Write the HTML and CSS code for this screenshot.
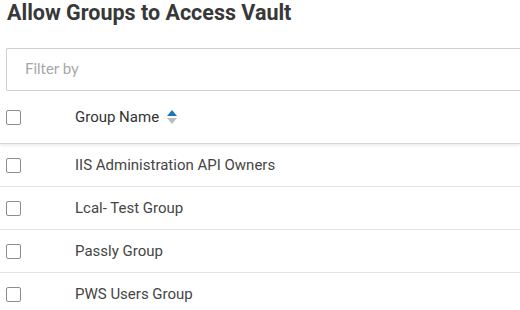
FILE: index.html
```html
<!DOCTYPE html>
<html lang="en">
<head>
  <meta charset="UTF-8">
  <title>Allow Groups to Access Vault</title>
  <link rel="stylesheet" href="styles.css">
</head>
<body>
  <div class="panel">
    <h2 class="panel-title">Allow Groups to Access Vault</h2>

    <div class="filter">
      <input class="filter-input" type="text" placeholder="Filter by">
    </div>

    <div class="grid">
      <div class="grid-row grid-head">
        <div class="cell-check"><span class="checkbox"></span></div>
        <div class="cell-name">
          Group Name
          <svg class="sort-icon" width="10" height="14" viewBox="0 0 10 14">
            <path d="M5 0 L10 6 L0 6 Z" fill="#1c75bc"/>
            <path d="M0 8 L10 8 L5 14 Z" fill="#bdbdbd"/>
          </svg>
        </div>
      </div>
      <div class="grid-row">
        <div class="cell-check"><span class="checkbox"></span></div>
        <div class="cell-name">IIS Administration API Owners</div>
      </div>
      <div class="grid-row">
        <div class="cell-check"><span class="checkbox"></span></div>
        <div class="cell-name">Lcal- Test Group</div>
      </div>
      <div class="grid-row">
        <div class="cell-check"><span class="checkbox"></span></div>
        <div class="cell-name">Passly Group</div>
      </div>
      <div class="grid-row">
        <div class="cell-check"><span class="checkbox"></span></div>
        <div class="cell-name">PWS Users Group</div>
      </div>
    </div>
  </div>
</body>
</html>
```
FILE: styles.css
```css
html, body {
  margin: 0;
  overflow: hidden;
  background: #fff;
}

/* the panel keeps going past the right edge of the window */
.panel {
  padding-left: 6px;
  font-family: Roboto, "Liberation Sans", sans-serif;
  color: #3a3a3a;
}

.panel-title {
  margin: 0;
  padding: 0 0 0 1px;
  font-size: 21.5px;
  font-weight: 700;
  line-height: 26px;
  color: #383838;
}

.filter {
  margin-top: 22px;
}

.filter-input {
  box-sizing: border-box;
  display: block;
  width: 100%;
  height: 43px;
  margin: 0;
  padding: 0 18px 3px;
  border: 1px solid #cfcfcf;
  border-right: none;
  border-radius: 2px 0 0 2px;
  font-family: Lato, "Open Sans", sans-serif;
  font-size: 15px;
  color: #333;
  outline: none;
}

.filter-input::placeholder {
  color: #a6a6a6;
}

.grid {
  margin-left: -6px;
}

.grid-row {
  display: flex;
  align-items: center;
  height: 42px;
  border-bottom: 1px solid #e3e3e3;
  font-size: 15px;
  color: #454545;
}

.grid-row .cell-name {
  padding-bottom: 1px;
}

.grid-head {
  height: 52px;
  border-bottom: 1px solid #d6d6d6;
  box-shadow: 0 2px 3px rgba(0, 0, 0, 0.07);
  color: #333;
}

.cell-check {
  width: 75px;
  padding-left: 6px;
  box-sizing: border-box;
  display: flex;
  align-items: center;
}

.cell-name {
  display: flex;
  align-items: center;
  gap: 8px;
}

.checkbox {
  display: block;
  width: 13px;
  height: 13px;
  border: 1px solid #8c8c8c;
  border-radius: 2px;
  background: #fff;
}

.sort-icon {
  display: block;
}
```
